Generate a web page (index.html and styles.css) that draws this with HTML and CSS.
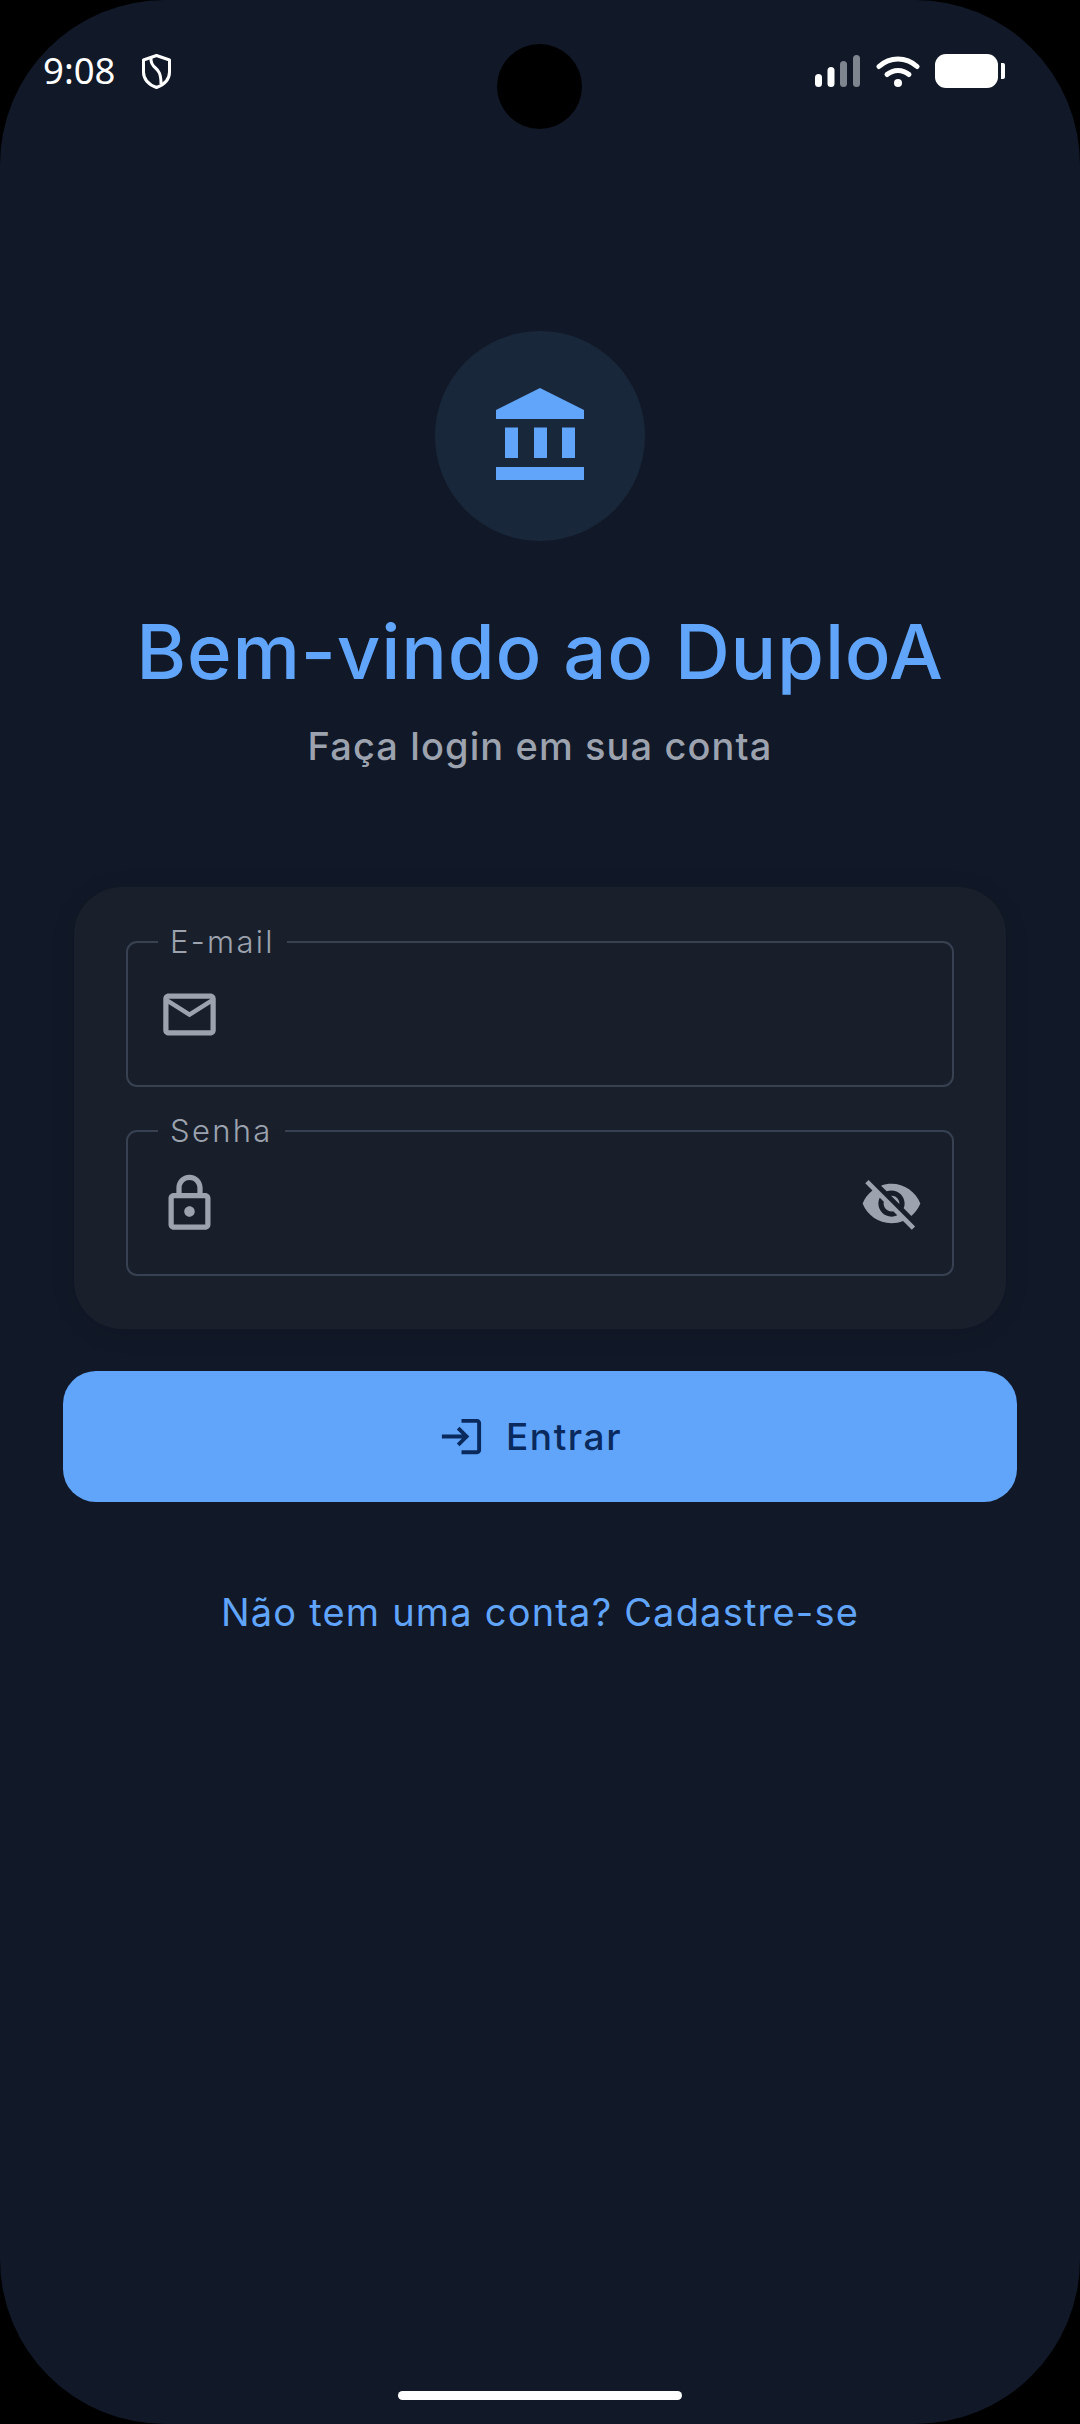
FILE: index.html
```html
<!DOCTYPE html>
<html lang="pt">
<head>
<meta charset="utf-8">
<title>DuploA</title>
<link rel="stylesheet" href="styles.css">
</head>
<body>
<div class="phone">
  <div class="camera"></div>
  <header class="status">
    <div class="status-left">
      <span class="time">9:08</span>
      <svg class="shield" viewBox="0 0 29 35"><path d="M14.500 1.500 27.500 6v12c0 7-5 12.500-13 15.500C6.500 30.500 1.500 25 1.500 18V6z" fill="none" stroke="#fff" stroke-width="3" stroke-linejoin="round"/><path d="M9 3.500c-.5 5 1.500 8 4.500 10.500s5.500 5.500 5.500 16" fill="none" stroke="#fff" stroke-width="3"/></svg>
    </div>
    <div class="status-right">
      <svg class="signal" viewBox="0 0 45 32"><rect x="0" y="19" width="7" height="13" rx="3.500" fill="#fff"/><rect x="12.500" y="12" width="7" height="20" rx="3.500" fill="#fff"/><rect x="25" y="6" width="7" height="26" rx="3.500" fill="#7f858f"/><rect x="38" y="0" width="7" height="32" rx="3.500" fill="#7f858f"/></svg>
      <svg class="wifi" viewBox="0 0 44 32"><path d="M3 11.500C14 1.500 30 1.500 41 11.500" fill="none" stroke="#fff" stroke-width="5" stroke-linecap="round"/><path d="M11 19.500C17.500 14 26.500 14 33 19.500" fill="none" stroke="#fff" stroke-width="5" stroke-linecap="round"/><circle cx="22" cy="28" r="4" fill="#fff"/></svg>
      <div class="battery"><div class="battery-body"></div><div class="battery-tip"></div></div>
    </div>
  </header>

  <main class="login">
    <div class="logo">
      <svg class="logo-icon" viewBox="0 0 88 92"><path d="M44 0 88 22V31H0V22Z M9 39.500H22V70H9Z M38 39.500H51V70H38Z M66 39.500H79V70H66Z M0 79H88V92H0Z" fill="#60a5fa"/></svg>
    </div>
    <h1 class="title">Bem-vindo ao DuploA</h1>
    <p class="subtitle">Faça login em sua conta</p>

    <form class="card">
      <fieldset class="field">
        <legend class="field-label">E-mail</legend>
        <div class="field-row">
          <svg class="field-icon" viewBox="0 0 24 24"><path d="M20 4H4c-1.100 0-1.990.9-1.990 2L2 18c0 1.100.9 2 2 2h16c1.100 0 2-.9 2-2V6c0-1.100-.9-2-2-2zm0 14H4V8l8 5 8-5v10zm-8-7L4 6h16l-8 5z"/></svg>
        </div>
      </fieldset>
      <fieldset class="field">
        <legend class="field-label">Senha</legend>
        <div class="field-row">
          <svg class="field-icon" viewBox="0 0 24 24"><path d="M18 8h-1V6c0-2.760-2.240-5-5-5S7 3.240 7 6v2H6c-1.100 0-2 .9-2 2v10c0 1.100.9 2 2 2h12c1.100 0 2-.9 2-2V10c0-1.100-.9-2-2-2zM9 6c0-1.660 1.340-3 3-3s3 1.340 3 3v2H9V6zm9 14H6V10h12v10zm-6-3c1.100 0 2-.9 2-2s-.9-2-2-2-2 .9-2 2 .9 2 2 2z"/></svg>
          <svg class="field-icon" viewBox="0 0 24 24"><path d="M12 7c2.760 0 5 2.240 5 5 0 .65-.13 1.260-.36 1.830l2.920 2.920c1.510-1.260 2.700-2.890 3.430-4.750-1.730-4.390-6-7.500-11-7.500-1.400 0-2.740.25-3.980.7l2.160 2.160C10.740 7.130 11.350 7 12 7zM2 4.270l2.280 2.280.46.46C3.080 8.300 1.780 10.020 1 12c1.730 4.390 6 7.500 11 7.500 1.550 0 3.030-.3 4.380-.84l.42.42L19.730 22 21 20.730 3.270 3 2 4.270zM7.530 9.800l1.550 1.550c-.05.21-.08.43-.08.65 0 1.660 1.340 3 3 3 .22 0 .44-.03.65-.08l1.550 1.550c-.67.33-1.410.53-2.200.53-2.760 0-5-2.240-5-5 0-.79.2-1.530.53-2.200zm4.310-.78l3.150 3.150.02-.16c0-1.660-1.340-3-3-3l-.17.01z"/></svg>
        </div>
      </fieldset>
    </form>

    <button class="submit" type="button">
      <svg class="submit-icon" viewBox="0 0 24 24"><path d="M11 7L9.600 8.400l2.600 2.600H2v2h10.200l-2.600 2.600L11 17l5-5-5-5zm9 12h-8v2h8c1.100 0 2-.9 2-2V5c0-1.100-.9-2-2-2h-8v2h8v14z"/></svg>
      <span>Entrar</span>
    </button>

    <a class="signup" href="#">Não tem uma conta? Cadastre-se</a>
  </main>

  <div class="home-bar"></div>
</div>
</body>
</html>
```
FILE: styles.css
```css
* { box-sizing: border-box; }
html, body { margin: 0; padding: 0; background: #000; }
body { width: 1080px; height: 2424px; overflow: hidden; }

.phone {
  position: relative;
  width: 1080px;
  height: 2424px;
  background: #111827;
  border-radius: 165px;
  display: flex;
  flex-direction: column;
  font-family: "Inter", "Liberation Sans", sans-serif;
}

.camera {
  position: absolute;
  left: 497px;
  top: 44px;
  width: 85px;
  height: 85px;
  border-radius: 50%;
  background: #000;
}

.status {
  display: flex;
  justify-content: space-between;
  align-items: center;
  height: 139px;
  padding: 0 75px 0 43px;
}
.status-left, .status-right { display: flex; align-items: center; }
.status-right { margin-top: 3px; }
.time {
  font-family: "Noto Sans", sans-serif;
  font-size: 36.500px;
  line-height: 50px;
  color: #fff;
}
.shield { width: 29px; height: 35px; margin: 4px 0 0 27px; }
.signal { width: 45px; height: 32px; }
.wifi { width: 44px; height: 32px; margin-left: 16px; }
.battery { display: flex; align-items: center; margin-left: 15px; }
.battery-body { width: 63px; height: 34px; border-radius: 11px; background: #fff; }
.battery-tip { width: 4px; height: 16px; margin-left: 3px; border-radius: 0 2px 2px 0; background: #fff; }

.login {
  display: flex;
  flex-direction: column;
  align-items: center;
  padding: 192px 63px 0;
}

.logo {
  width: 210px;
  height: 210px;
  border-radius: 50%;
  background: #182739;
  display: flex;
  align-items: center;
  justify-content: center;
}
.logo-icon { width: 88px; height: 92px; margin-top: -4px; }

.title {
  margin: 60px 0 0;
  font-size: 76px;
  line-height: 100px;
  font-weight: 550;
  letter-spacing: 0.800px;
  color: #60a5fa;
  white-space: nowrap;
}
.subtitle {
  margin: 19px 0 0;
  font-size: 38px;
  line-height: 52px;
  font-weight: 500;
  letter-spacing: 1.100px;
  color: #9ca3af;
}

.card {
  align-self: stretch;
  margin: 115px 11px 0;
  padding: 53px 52px;
  border-radius: 48px;
  background: #19202b;
  box-shadow: 0 4px 24px rgba(0, 0, 0, 0.1);
  display: flex;
  flex-direction: column;
  gap: 42px;
}

.field {
  margin: 0;
  padding: 0 29px 0 30px;
  height: 147px;
  border: 2.500px solid #374151;
  border-radius: 11px;
  background: #181f2a;
}
.field-label {
  padding: 0 12px;
  font-size: 31px;
  line-height: 3px;
  font-weight: 300;
  letter-spacing: 2.300px;
  color: #9ca3af;
}
.field-row {
  height: 142px;
  display: flex;
  align-items: center;
  justify-content: space-between;
}
.field-icon { width: 63px; height: 63px; fill: #9ca3af; flex: none; }

.submit {
  align-self: stretch;
  height: 131px;
  margin-top: 42px;
  padding: 0 20px 0 0;
  border: 0;
  border-radius: 33px;
  background: #60a5fa;
  color: #0a2a5e;
  font-family: inherit;
  font-size: 37px;
  font-weight: 500;
  letter-spacing: 1.600px;
  display: flex;
  align-items: center;
  justify-content: center;
  gap: 21px;
}
.submit-icon { width: 47px; height: 47px; fill: #0a2a5e; }

.signup {
  margin-top: 85px;
  font-size: 38px;
  line-height: 50px;
  letter-spacing: 1.200px;
  color: #60a5fa;
  text-decoration: none;
}

.home-bar {
  width: 284px;
  height: 9px;
  margin: auto auto 24px;
  border-radius: 5px;
  background: #fff;
}
```
